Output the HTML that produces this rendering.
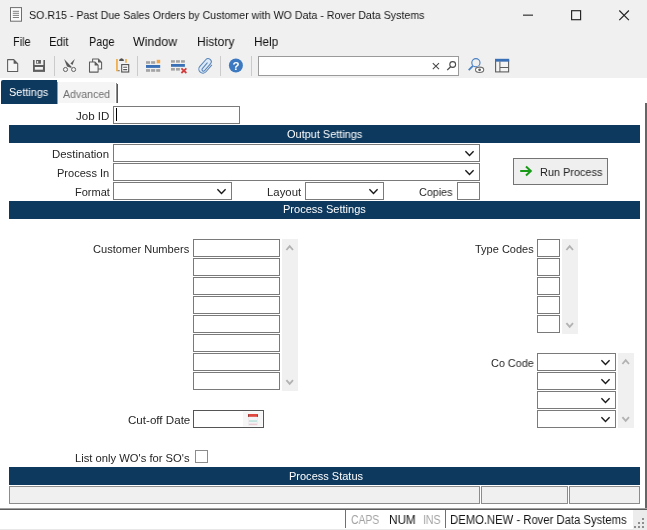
<!DOCTYPE html>
<html>
<head>
<meta charset="utf-8">
<title>SO.R15 - Past Due Sales Orders by Customer with WO Data - Rover Data Systems</title>
<style>
*{box-sizing:border-box;margin:0;padding:0}
html,body{width:647px;height:530px;overflow:hidden;background:#f0f0f0;font-family:"Liberation Sans",sans-serif}
#w{position:relative;width:647px;height:530px;background:#f0f0f0;overflow:hidden}
.a{position:absolute}
.t{position:absolute;white-space:nowrap;line-height:1;transform-origin:0 50%;will-change:transform}
.in{position:absolute;background:#fff;border:1px solid #7a7a7a}
svg{position:absolute;overflow:visible}
svg.s{pointer-events:none}
</style>
</head>
<body>
<div id="w">

<svg style="left:10px;top:7px" width="12" height="15" viewBox="0 0 12 15">
<rect x="0.5" y="0.6" width="11" height="13.6" fill="#fbfbfb" stroke="#6e6e6e"/>
<path d="M2.8 4.3h6.2M2.8 6.3h6.2M2.8 8.4h6.2M2.8 10.5h6.2" stroke="#808080" stroke-width="1"/></svg>
<div class="t" style="left:29.00px;top:10px;font-size:11px;color:#151515;transform:scaleX(0.9686)">SO.R15 - Past Due Sales Orders by Customer with WO Data - Rover Data Systems</div>
<svg style="left:523px;top:14px" width="12" height="3"><rect y="0.6" width="10" height="1.1" fill="#222"/></svg>
<svg style="left:571px;top:10px" width="11" height="11"><rect x=".6" y=".7" width="9" height="9" fill="none" stroke="#222" stroke-width="1.15"/></svg>
<svg style="left:619px;top:10px" width="11" height="11"><path d="M0.3 0.5L9.9 10.1M9.9 0.5L0.3 10.1" stroke="#222" stroke-width="1.15" fill="none"/></svg>
<div class="t" style="left:12.70px;top:36px;font-size:12.5px;color:#111;transform:scaleX(0.8687)">File</div>
<div class="t" style="left:49.40px;top:36px;font-size:12.5px;color:#111;transform:scaleX(0.9100)">Edit</div>
<div class="t" style="left:88.70px;top:36px;font-size:12.5px;color:#111;transform:scaleX(0.8734)">Page</div>
<div class="t" style="left:133.00px;top:36px;font-size:12.5px;color:#111;transform:scaleX(0.9896)">Window</div>
<div class="t" style="left:196.70px;top:36px;font-size:12.5px;color:#111;transform:scaleX(0.9590)">History</div>
<div class="t" style="left:253.50px;top:36px;font-size:12.5px;color:#111;transform:scaleX(0.9412)">Help</div>
<div class="in" style="left:258px;top:56px;width:201px;height:20px;border-color:#9a9a9a;background:#fff"></div>
<svg class="s" width="647" height="530" style="left:0;top:0" viewBox="0 0 647 530">
<!-- separators -->
<path d="M54.5 56V76M137.5 56V76M220.5 56V76M251.5 56V76" stroke="#cbcbcb" stroke-width="1" fill="none"/>
<!-- new -->
<path d="M7.6 59.6H13.8L17.7 63.5V71.4H7.6Z" fill="#f6f6f6" stroke="#5c5c5c" stroke-width="1.05" stroke-linejoin="round"/>
<path d="M13.6 59.4L17.9 63.7H13.6Z" fill="#5c5c5c"/>
<!-- save -->
<rect x="33" y="60" width="12" height="11.9" fill="#5e5e5e"/>
<rect x="34.6" y="59.9" width="8.8" height="5.1" fill="#efefef"/>
<rect x="36.1" y="60" width="4.8" height="3.7" fill="#5e5e5e"/>
<rect x="36.9" y="61" width="1.3" height="2.1" fill="#e6e6e6"/>
<rect x="34.85" y="67" width="8.1" height="2.7" fill="#f3f3f3"/>
<!-- cut -->
<path d="M64.1 59L72 67.3L70.7 67.8L67 66.4Z" fill="#595959"/>
<path d="M74.8 59L70.4 63.6L72.5 65Z" fill="#595959"/>
<circle cx="65.5" cy="69.5" r="2.05" fill="none" stroke="#5c5c5c" stroke-width="0.95"/>
<circle cx="73.6" cy="69.5" r="2.05" fill="none" stroke="#5c5c5c" stroke-width="0.95"/>
<!-- copy -->
<path d="M92.6 58.9H98.2L101.6 62.3V68.9H92.6Z" fill="#f3f3f3" stroke="#5c5c5c" stroke-width="1.05" stroke-linejoin="round"/>
<path d="M98 58.7L101.8 62.5H98Z" fill="#5c5c5c"/>
<path d="M89.5 61.9H94.8L98.1 65.2V72.1H89.5Z" fill="#f3f3f3" stroke="#5c5c5c" stroke-width="1.05" stroke-linejoin="round"/>
<path d="M94.6 61.7L98.3 65.4H94.6Z" fill="#5c5c5c"/>
<!-- paste -->
<path d="M116.95 59V71.3" fill="none" stroke="#eda73e" stroke-width="1.6"/><path d="M117.7 70.7H119.7" stroke="#8a7a62" stroke-width="1.1"/>
<path d="M126 59V62.7" fill="none" stroke="#eda73e" stroke-width="1.5"/>
<path d="M119.2 60.9V59.7Q121.5 56.7 123.8 59.7V60.9Z" fill="#505050"/>
<rect x="121.7" y="64.6" width="7" height="7.4" fill="#fff" stroke="#555" stroke-width="1.15"/>
<path d="M123.2 67.3H127.2M123.2 69.6H127.2" stroke="#555" stroke-width="1.1"/>
<!-- grid 1 -->
<g fill="#a3a3a3">
<rect x="146" y="61.2" width="4.1" height="2.6"/><rect x="151.1" y="61.2" width="4.1" height="2.6"/>
<rect x="146" y="69.1" width="4.1" height="2.7"/><rect x="151.1" y="69.1" width="4.1" height="2.7"/><rect x="156.2" y="69.1" width="4" height="2.7"/>
</g>
<rect x="156.7" y="59.8" width="3.5" height="3.5" fill="#f0a648"/>
<rect x="146" y="65" width="14.2" height="2.9" fill="#3a70b6"/>
<!-- grid 2 -->
<g fill="#a3a3a3">
<rect x="171" y="60.2" width="3.9" height="2.5"/><rect x="176" y="60.2" width="3.9" height="2.5"/><rect x="181" y="60.2" width="3.9" height="2.5"/>
<rect x="171" y="68" width="3.9" height="2.6"/><rect x="176" y="68" width="3.9" height="2.6"/>
</g>
<rect x="171" y="64" width="13.9" height="2.8" fill="#3a70b6"/>
<path d="M181.4 68.4L186.4 73M186.4 68.4L181.4 73" stroke="#d23b3b" stroke-width="1.7" fill="none"/>
<!-- paperclip -->
<g transform="translate(205.2 65.8) rotate(-49)" stroke-linecap="round">
<path d="M-4 -3.6H4.9A3.15 3.15 0 0 1 4.9 2.7H-4L-4 4.5A4.05 4.05 0 0 1 -4 -3.6Z" fill="#dbe9f8" stroke="none"/>
<path d="M4.7 4.5H-4A4.05 4.05 0 0 1 -4 -3.6H4.9A3.15 3.15 0 0 1 4.9 2.7H-4A1.5 1.5 0 0 1 -4 -0.3H3.5" fill="none" stroke="#5a84b6" stroke-width="1.05"/>
</g>
<!-- help -->
<circle cx="235.9" cy="65.5" r="7" fill="#3c79c0"/>
<text x="235.9" y="69.6" font-family="Liberation Sans, sans-serif" font-weight="bold" font-size="11.5" fill="#fff" text-anchor="middle">?</text>
<!-- search box icons -->
<path d="M432.8 63.2L439 69.2M439 63.2L432.8 69.2" stroke="#4a4a4a" stroke-width="1.1" fill="none"/>
<circle cx="452.7" cy="64.5" r="2.9" fill="none" stroke="#4a4a4a" stroke-width="1.1"/>
<path d="M450.6 66.7L447.2 70.1" stroke="#4a4a4a" stroke-width="1.3" fill="none"/>
<!-- search eye -->
<circle cx="475.9" cy="62.7" r="4.1" fill="none" stroke="#4a82c3" stroke-width="1.15"/>
<path d="M472.9 65.9L468.7 70.2" stroke="#4a82c3" stroke-width="1.8" fill="none"/>
<ellipse cx="479.6" cy="69.8" rx="5" ry="3.6" fill="#f0f0f0"/>
<ellipse cx="479.6" cy="69.8" rx="4.1" ry="2.7" fill="#fff" stroke="#707070" stroke-width="1.1"/>
<circle cx="479.6" cy="69.8" r="1.4" fill="#606060"/>
<!-- layout -->
<rect x="495.6" y="60.6" width="13" height="11.3" fill="#f4f4f4" stroke="#5e5e5e" stroke-width="1.1"/>
<rect x="495" y="58.8" width="14.2" height="2.8" fill="#3a70b6"/>
<path d="M499.9 61.6V72M499.9 67.5H508.6" stroke="#5e5e5e" stroke-width="1.05" fill="none"/>
</svg>

<div class="a" style="left:0px;top:78px;width:647px;height:432px;background:#fff;"></div>
<div class="a" style="left:645px;top:103px;width:2px;height:407px;background:#666;"></div>
<div class="a" style="left:0px;top:508px;width:647px;height:1px;background:#a0a0a0;"></div>
<div class="a" style="left:0px;top:509px;width:647px;height:1px;background:#5c5c5c;"></div>
<div class="a" style="left:1px;top:80px;width:56px;height:24px;background:#0d395e;border-radius:2px 0 0 0"></div>
<div class="t" style="left:9.00px;top:87px;font-size:11px;color:#fff;transform:scaleX(0.9864)">Settings</div>
<div class="a" style="left:58px;top:82px;width:57px;height:21px;background:#f5f5f5;"></div>
<div class="a" style="left:57px;top:82px;width:1px;height:22px;background:#8d9bab;"></div>
<div class="t" style="left:63.10px;top:89px;font-size:11px;color:#6e6e6e;transform:scaleX(0.9628)">Advanced</div>
<div class="a" style="left:116px;top:83px;width:1px;height:20px;background:#8c8c8c;"></div>
<div class="a" style="left:117px;top:84px;width:1px;height:19px;background:#585858;"></div>
<div class="t" style="left:76.40px;top:111px;font-size:11px;color:#262626;transform:scaleX(1.0507)">Job ID</div>
<div class="in" style="left:113px;top:106px;width:127px;height:18px;border-color:#7a7a7a;background:#fff"></div>
<div class="a" style="left:116px;top:108px;width:1px;height:13px;background:#000;"></div>
<div class="a" style="left:9px;top:125px;width:631px;height:18px;background:#0d395e;"></div>
<div class="t" style="left:287.30px;top:129px;font-size:11px;color:#fff;transform:scaleX(0.9932)">Output Settings</div>
<div class="t" style="left:52.30px;top:149px;font-size:11px;color:#262626;transform:scaleX(1.0358)">Destination</div>
<div class="in" style="left:113px;top:144px;width:367px;height:18px;border-color:#7a7a7a;background:#fff"></div>
<svg class="s" width="647" height="530" style="left:0;top:0"><path d="M465.4 151.35L469.5 155.45000000000002L473.59999999999997 151.35" fill="none" stroke="#1a1a1a" stroke-width="1.45"/></svg>
<div class="t" style="left:57.20px;top:168px;font-size:11px;color:#262626;transform:scaleX(1.0046)">Process In</div>
<div class="in" style="left:113px;top:163px;width:367px;height:18px;border-color:#7a7a7a;background:#fff"></div>
<svg class="s" width="647" height="530" style="left:0;top:0"><path d="M465.4 170.35L469.5 174.45000000000002L473.59999999999997 170.35" fill="none" stroke="#1a1a1a" stroke-width="1.45"/></svg>
<div class="t" style="left:74.70px;top:187px;font-size:11px;color:#262626;transform:scaleX(0.9990)">Format</div>
<div class="in" style="left:113px;top:182px;width:119px;height:18px;border-color:#7a7a7a;background:#fff"></div>
<svg class="s" width="647" height="530" style="left:0;top:0"><path d="M217.4 189.35L221.5 193.45000000000002L225.6 189.35" fill="none" stroke="#1a1a1a" stroke-width="1.45"/></svg>
<div class="t" style="left:267.20px;top:187px;font-size:11px;color:#262626;transform:scaleX(1.0326)">Layout</div>
<div class="in" style="left:305px;top:182px;width:79px;height:18px;border-color:#7a7a7a;background:#fff"></div>
<svg class="s" width="647" height="530" style="left:0;top:0"><path d="M369.4 189.35L373.5 193.45000000000002L377.59999999999997 189.35" fill="none" stroke="#1a1a1a" stroke-width="1.45"/></svg>
<div class="t" style="left:419.40px;top:187px;font-size:11px;color:#262626;transform:scaleX(0.9783)">Copies</div>
<div class="in" style="left:457px;top:182px;width:23px;height:18px;border-color:#7a7a7a;background:#fff"></div>
<div class="a" style="left:513px;top:158px;width:95px;height:27px;background:#efefef;border:1px solid #747474"></div>
<svg class="s" width="647" height="530" style="left:0;top:0"><path d="M520.2 171H530.6M526 166.6L530.8 171L526 175.4" stroke="#189a18" stroke-width="2" fill="none"/></svg>
<div class="t" style="left:539.80px;top:167px;font-size:11px;color:#222;transform:scaleX(0.9910)">Run Process</div>
<div class="a" style="left:9px;top:201px;width:631px;height:18px;background:#0d395e;"></div>
<div class="t" style="left:283.40px;top:204px;font-size:11px;color:#fff;transform:scaleX(1.0033)">Process Settings</div>
<div class="t" style="left:92.70px;top:244px;font-size:11px;color:#262626;transform:scaleX(1.0088)">Customer Numbers</div>
<div class="in" style="left:193px;top:239px;width:87px;height:18px;border-color:#7a7a7a;background:#fff"></div>
<div class="in" style="left:193px;top:258px;width:87px;height:18px;border-color:#7a7a7a;background:#fff"></div>
<div class="in" style="left:193px;top:277px;width:87px;height:18px;border-color:#7a7a7a;background:#fff"></div>
<div class="in" style="left:193px;top:296px;width:87px;height:18px;border-color:#7a7a7a;background:#fff"></div>
<div class="in" style="left:193px;top:315px;width:87px;height:18px;border-color:#7a7a7a;background:#fff"></div>
<div class="in" style="left:193px;top:334px;width:87px;height:18px;border-color:#7a7a7a;background:#fff"></div>
<div class="in" style="left:193px;top:353px;width:87px;height:18px;border-color:#7a7a7a;background:#fff"></div>
<div class="in" style="left:193px;top:372px;width:87px;height:18px;border-color:#7a7a7a;background:#fff"></div>
<div class="a" style="left:282px;top:239px;width:16px;height:152px;background:#f0f0f0;"></div>
<svg class="s" width="647" height="530" style="left:0;top:0"><path d="M286.4 250.0L289.7 246.2L293.0 250.0" fill="none" stroke="#b2b2b2" stroke-width="1.8"/></svg>
<svg class="s" width="647" height="530" style="left:0;top:0"><path d="M286.4 380.1L289.7 383.9L293.0 380.1" fill="none" stroke="#b2b2b2" stroke-width="1.8"/></svg>
<div class="t" style="left:474.50px;top:244px;font-size:11px;color:#262626;transform:scaleX(0.9983)">Type Codes</div>
<div class="in" style="left:537px;top:239px;width:23px;height:18px;border-color:#7a7a7a;background:#fff"></div>
<div class="in" style="left:537px;top:258px;width:23px;height:18px;border-color:#7a7a7a;background:#fff"></div>
<div class="in" style="left:537px;top:277px;width:23px;height:18px;border-color:#7a7a7a;background:#fff"></div>
<div class="in" style="left:537px;top:296px;width:23px;height:18px;border-color:#7a7a7a;background:#fff"></div>
<div class="in" style="left:537px;top:315px;width:23px;height:18px;border-color:#7a7a7a;background:#fff"></div>
<div class="a" style="left:562px;top:239px;width:16px;height:95px;background:#f0f0f0;"></div>
<svg class="s" width="647" height="530" style="left:0;top:0"><path d="M566.4000000000001 250.0L569.7 246.2L573.0000000000001 250.0" fill="none" stroke="#b2b2b2" stroke-width="1.8"/></svg>
<svg class="s" width="647" height="530" style="left:0;top:0"><path d="M566.4000000000001 323.1L569.7 326.9L573.0000000000001 323.1" fill="none" stroke="#b2b2b2" stroke-width="1.8"/></svg>
<div class="t" style="left:490.90px;top:358px;font-size:11px;color:#262626;transform:scaleX(0.9859)">Co Code</div>
<div class="in" style="left:537px;top:353px;width:79px;height:18px;border-color:#7a7a7a;background:#fff"></div>
<svg class="s" width="647" height="530" style="left:0;top:0"><path d="M601.4 360.34999999999997L605.5 364.45L609.6 360.34999999999997" fill="none" stroke="#1a1a1a" stroke-width="1.45"/></svg>
<div class="in" style="left:537px;top:372px;width:79px;height:18px;border-color:#7a7a7a;background:#fff"></div>
<svg class="s" width="647" height="530" style="left:0;top:0"><path d="M601.4 379.34999999999997L605.5 383.45L609.6 379.34999999999997" fill="none" stroke="#1a1a1a" stroke-width="1.45"/></svg>
<div class="in" style="left:537px;top:391px;width:79px;height:18px;border-color:#7a7a7a;background:#fff"></div>
<svg class="s" width="647" height="530" style="left:0;top:0"><path d="M601.4 398.34999999999997L605.5 402.45L609.6 398.34999999999997" fill="none" stroke="#1a1a1a" stroke-width="1.45"/></svg>
<div class="in" style="left:537px;top:410px;width:79px;height:18px;border-color:#7a7a7a;background:#fff"></div>
<svg class="s" width="647" height="530" style="left:0;top:0"><path d="M601.4 417.34999999999997L605.5 421.45L609.6 417.34999999999997" fill="none" stroke="#1a1a1a" stroke-width="1.45"/></svg>
<div class="a" style="left:618px;top:353px;width:16px;height:75px;background:#f0f0f0;"></div>
<svg class="s" width="647" height="530" style="left:0;top:0"><path d="M622.4000000000001 364.0L625.7 360.20000000000005L629.0000000000001 364.0" fill="none" stroke="#b2b2b2" stroke-width="1.8"/></svg>
<svg class="s" width="647" height="530" style="left:0;top:0"><path d="M622.4000000000001 417.1L625.7 420.9L629.0000000000001 417.1" fill="none" stroke="#b2b2b2" stroke-width="1.8"/></svg>
<div class="t" style="left:127.50px;top:415px;font-size:11px;color:#262626;transform:scaleX(1.0542)">Cut-off Date</div>
<div class="in" style="left:193px;top:410px;width:71px;height:18px;border-color:#555;background:#fff"></div>
<svg class="s" width="647" height="530" style="left:0;top:0"><rect x="243" y="411.5" width="19.5" height="15" fill="#f6f6f7"/>
<rect x="248.3" y="416.5" width="9.3" height="8.6" fill="#f3f3f6" stroke="#e9e6ea" stroke-width=".6"/>
<rect x="248" y="414" width="9.9" height="2.8" fill="#e0473f"/><rect x="248" y="414.6" width=".9" height="2.2" fill="#8c3a3a"/><rect x="257" y="414.6" width=".9" height="2.2" fill="#8c3a3a"/>
<rect x="249" y="420.2" width="8" height="1.7" fill="#bfe3de"/><rect x="249" y="423.8" width="8" height=".8" fill="#e6b4bd"/></svg>
<div class="t" style="left:75.30px;top:453px;font-size:11px;color:#262626;transform:scaleX(1.0188)">List only WO's for SO's</div>
<div class="in" style="left:195px;top:450px;width:13px;height:13px;border-color:#8c8c8c;background:#fff"></div>
<div class="a" style="left:9px;top:467px;width:631px;height:18px;background:#0d395e;"></div>
<div class="t" style="left:288.70px;top:471px;font-size:11px;color:#fff;transform:scaleX(1.0004)">Process Status</div>
<div class="in" style="left:9px;top:486px;width:471px;height:18px;border-color:#8c8c8c;background:#f0f0f0"></div>
<div class="in" style="left:481px;top:486px;width:87px;height:18px;border-color:#8c8c8c;background:#f0f0f0"></div>
<div class="in" style="left:569px;top:486px;width:71px;height:18px;border-color:#8c8c8c;background:#f0f0f0"></div>
<div class="a" style="left:0px;top:510px;width:647px;height:20px;background:#fff;"></div>
<div class="a" style="left:0px;top:529px;width:647px;height:1px;background:#e8e8e8;"></div>
<div class="a" style="left:345px;top:510px;width:1px;height:18px;background:#707070;"></div>
<div class="a" style="left:445px;top:510px;width:1px;height:18px;background:#707070;"></div>
<div class="t" style="left:350.70px;top:514px;font-size:12px;color:#a2a2a2;transform:scaleX(0.8599)">CAPS</div>
<div class="t" style="left:388.70px;top:514px;font-size:12px;color:#101010;transform:scaleX(0.9769)">NUM</div>
<div class="t" style="left:423.40px;top:514px;font-size:12px;color:#a2a2a2;transform:scaleX(0.8747)">INS</div>
<div class="t" style="left:449.80px;top:514px;font-size:12px;color:#151515;transform:scaleX(0.9396)">DEMO.NEW - Rover Data Systems</div>
<div class="a" style="left:633px;top:510px;width:14px;height:20px;background:#ececec;"></div>
<div class="a" style="left:642px;top:518px;width:2px;height:2px;background:#8e8e8e;"></div>
<div class="a" style="left:638px;top:522px;width:2px;height:2px;background:#8e8e8e;"></div>
<div class="a" style="left:642px;top:522px;width:2px;height:2px;background:#8e8e8e;"></div>
<div class="a" style="left:634px;top:526px;width:2px;height:2px;background:#8e8e8e;"></div>
<div class="a" style="left:638px;top:526px;width:2px;height:2px;background:#8e8e8e;"></div>
<div class="a" style="left:642px;top:526px;width:2px;height:2px;background:#8e8e8e;"></div>
</div>
</body>
</html>
